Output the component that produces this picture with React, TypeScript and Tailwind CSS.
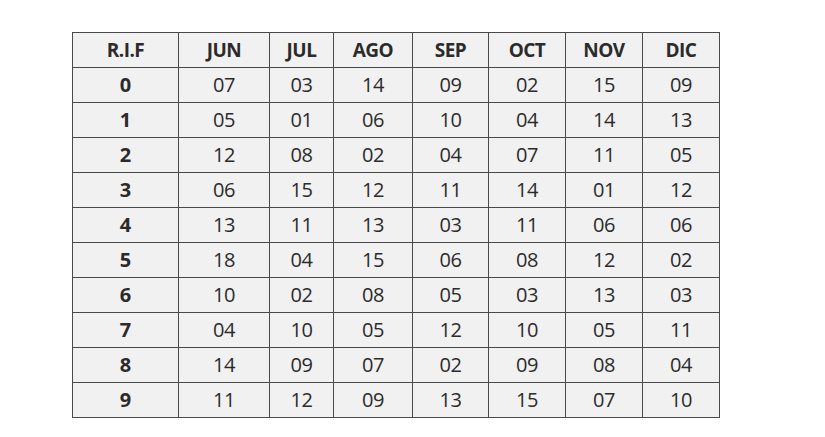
const meses = ['JUN', 'JUL', 'AGO', 'SEP', 'OCT', 'NOV', 'DIC'];
const anchos = ['w-[106px]', 'w-[91px]', 'w-[64px]', 'w-[79px]', 'w-[76px]', 'w-[77px]', 'w-[77px]', 'w-[77px]'];

// calendario por último dígito del RIF
const filas: string[][] = [
  ['07', '03', '14', '09', '02', '15', '09'],
  ['05', '01', '06', '10', '04', '14', '13'],
  ['12', '08', '02', '04', '07', '11', '05'],
  ['06', '15', '12', '11', '14', '01', '12'],
  ['13', '11', '13', '03', '11', '06', '06'],
  ['18', '04', '15', '06', '08', '12', '02'],
  ['10', '02', '08', '05', '03', '13', '03'],
  ['04', '10', '05', '12', '10', '05', '11'],
  ['14', '09', '07', '02', '09', '08', '04'],
  ['11', '12', '09', '13', '15', '07', '10'],
];

const celda = 'h-[35px] border-[1.5px] border-[#4a4a4a] text-center align-middle p-0 leading-none';

export default function App() {
  return (
    <div
      className="w-[825px] h-[437px] bg-white pl-[72px] pt-[32px] text-[#2b2b2b]"
      style={{ fontFamily: '"Open Sans", sans-serif' }}
    >
      <table className="table-fixed border-collapse bg-[#f1f1f1] w-[647px]">
        <colgroup>
          {anchos.map((w, i) => (
            <col key={i} className={w} />
          ))}
        </colgroup>
        <thead>
          <tr>
            <th className={`${celda} text-[19px] font-bold tracking-[-0.5px]`}>R.I.F</th>
            {meses.map((m) => (
              <th key={m} className={`${celda} text-[19px] font-bold tracking-[-0.5px]`}>
                {m}
              </th>
            ))}
          </tr>
        </thead>
        <tbody>
          {filas.map((fila, i) => (
            <tr key={i}>
              <td className={`${celda} text-[20px] font-bold`}>{i}</td>
              {fila.map((v, j) => (
                <td key={j} className={`${celda} text-[20px] tracking-[-0.5px]`}>
                  {v}
                </td>
              ))}
            </tr>
          ))}
        </tbody>
      </table>
    </div>
  );
}
